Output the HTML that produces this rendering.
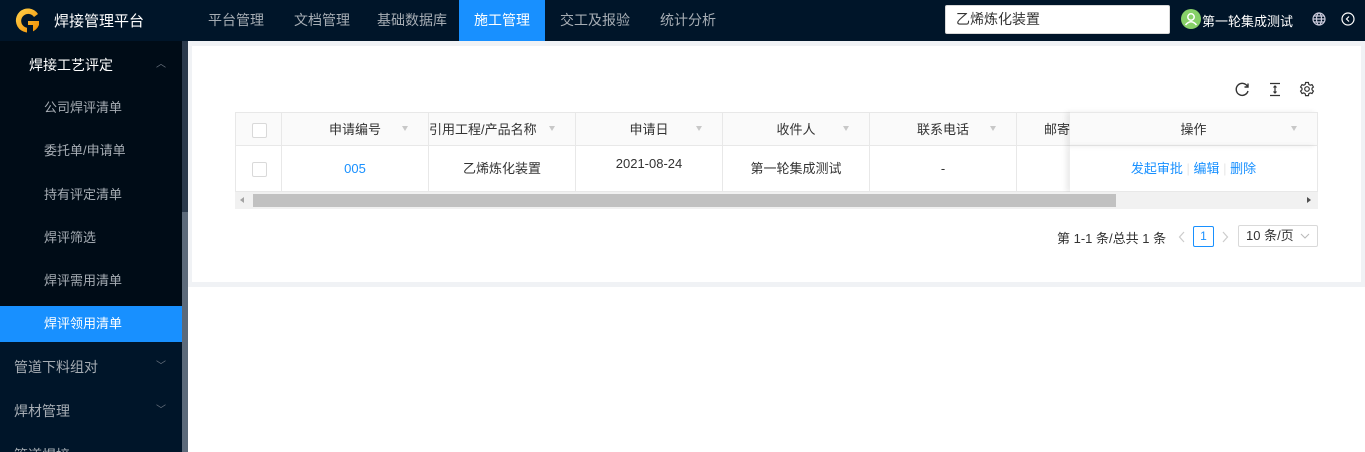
<!DOCTYPE html>
<html style="overflow:hidden;height:452px"><head><meta charset="utf-8"><style>
*{margin:0;padding:0;box-sizing:border-box}
body{width:1365px;height:452px;overflow:hidden;background:#fff;font-family:"Liberation Sans","Noto Sans CJK SC",sans-serif;font-size:13px;color:#333;position:relative}
.hdr{position:absolute;left:0;top:0;width:1365px;height:41px;background:#001529}
.logo{position:absolute;left:13px;top:8px;width:30px;height:26px}
.title{position:absolute;left:54px;top:10px;color:#fff;font-size:15px}
.nav{position:absolute;top:0;height:41px;line-height:41px;color:#a6adb4;font-size:14px;text-align:center}
.nav.act{background:#1890ff;color:#fff}
.search{position:absolute;left:945px;top:5px;width:225px;height:29px;background:#fff;border:1px solid #d9d9d9;border-radius:2px;padding-left:10px;line-height:27px;font-size:14px;color:#333}
.av{position:absolute;left:1181px;top:9px;width:20px;height:20px;border-radius:50%;background:#87d068}
.uname{position:absolute;left:1202px;top:11px;color:#fff;font-size:13px}
.side{position:absolute;left:0;top:41px;width:182px;height:411px;background:#001529;overflow:hidden}
.sub{position:absolute;left:0;top:0;width:182px;height:265px;background:#000c17}
.si{position:absolute;left:0;width:182px;height:36px;line-height:36px;font-size:13px;color:#a6adb4;padding-left:44px}
.ri{position:absolute;left:0;width:182px;height:40px;line-height:40px;font-size:14px;color:#a6adb4;padding-left:14px;overflow:hidden}
.car{position:absolute;right:16px;top:14px;line-height:12px;height:12px;color:#6a7480;font-size:10px}
.sb{position:absolute;left:182px;top:41px;width:6px;height:411px;background:#2b3a4c}
.sbt{position:absolute;left:182px;top:212px;width:6px;height:240px;background:#5c6a7a}
.bg{position:absolute;left:188px;top:41px;width:1177px;height:246px;background:#f0f2f5}
.card{position:absolute;left:192px;top:46px;width:1169px;height:236px;background:#fff}
.th{position:absolute;top:112px;height:34px;background:#fafafa;border-bottom:1px solid #e8e8e8;border-right:1px solid #e8e8e8;text-align:center;line-height:33px;color:#333}
.td{position:absolute;top:146px;height:46px;border-bottom:1px solid #e8e8e8;border-right:1px solid #e8e8e8;text-align:center;line-height:46px}
.fil{position:absolute;top:13px;width:0;height:0;border-left:3.5px solid transparent;border-right:3.5px solid transparent;border-top:5px solid #c8c8c8}
.cb{position:absolute;width:15px;height:15px;border:1px solid #d9d9d9;border-radius:2px;background:#fff}
.a{color:#1890ff}
</style></head><body>
<div class="hdr">
<svg class="logo" viewBox="0 0 30 26"><defs><linearGradient id="g" x1="0" y1="0" x2="1" y2="1"><stop offset="0" stop-color="#ffd24d"/><stop offset="1" stop-color="#f08c00"/></linearGradient></defs><path d="M25 6 A12 12 0 1 0 26 17 L26 13 L15 13 L15 18 L20 18 A7 7 0 1 1 21 9 Z" fill="url(#g)"/><rect x="14" y="17" width="6" height="8" fill="#001529"/></svg>
<div class="title">焊接管理平台</div>
<div class="nav" style="left:193px;width:86px">平台管理</div>
<div class="nav" style="left:279px;width:86px">文档管理</div>
<div class="nav" style="left:365px;width:94px">基础数据库</div>
<div class="nav act" style="left:459px;width:86px">施工管理</div>
<div class="nav" style="left:545px;width:100px">交工及报验</div>
<div class="nav" style="left:645px;width:86px">统计分析</div>
<div class="search">乙烯炼化装置</div>
<div class="av"><svg width="20" height="20" viewBox="0 0 20 20"><circle cx="10" cy="8" r="3.2" fill="none" stroke="#fff" stroke-width="1.5"/><path d="M4.5 16 Q10 9.5 15.5 16" fill="none" stroke="#fff" stroke-width="1.5"/></svg></div>
<div class="uname">第一轮集成测试</div>
<svg style="position:absolute;left:1312px;top:12px" width="14" height="14" viewBox="0 0 14 14" fill="none" stroke="#ccd" stroke-width="1.2"><circle cx="7" cy="7" r="6"/><ellipse cx="7" cy="7" rx="2.5" ry="6"/><path d="M1 7h12M2 4h10M2 10h10"/></svg>
<svg style="position:absolute;left:1341px;top:12px" width="14" height="14" viewBox="0 0 14 14" fill="none" stroke="#fff" stroke-width="1.2"><circle cx="7" cy="7" r="6"/><path d="M8 4.5 5.5 7 8 9.5"/></svg>
</div>
<div class="side">
<div class="sub">
<div class="ri" style="top:4px;color:#fff;padding-left:29px">焊接工艺评定<span class="car">︿</span></div>
<div class="si" style="top:49px">公司焊评清单</div>
<div class="si" style="top:92px">委托单/申请单</div>
<div class="si" style="top:136px">持有评定清单</div>
<div class="si" style="top:179px">焊评筛选</div>
<div class="si" style="top:222px">焊评需用清单</div>
</div>
<div class="si" style="top:265px;background:#1890ff;color:#fff">焊评领用清单</div>
<div class="ri" style="top:306px">管道下料组对<span class="car">﹀</span></div>
<div class="ri" style="top:350px">焊材管理<span class="car">﹀</span></div>
<div class="ri" style="top:394px;height:17px">管道焊接</div>
</div>
<div class="sb"></div><div class="sbt"></div>
<div class="bg"></div>
<div class="card"></div>
<svg style="position:absolute;left:1235px;top:82px" width="15" height="15" viewBox="0 0 15 15" fill="none" stroke="#333" stroke-width="1.4"><path d="M12.5 4.5A6 6 0 1 0 13 9"/><path d="M13 1.5v3.5h-3.5"/></svg>
<svg style="position:absolute;left:1268px;top:82px" width="14" height="15" viewBox="0 0 14 15" fill="none" stroke="#333" stroke-width="1.2"><path d="M2 1.5h10M2 13.5h10M7 4v7M5.5 5.5 7 4l1.5 1.5M5.5 9.5 7 11l1.5-1.5"/></svg>
<svg style="position:absolute;left:1299px;top:81px" width="16" height="16" viewBox="0 0 16 16" fill="none" stroke="#333" stroke-width="1.2"><path d="M6.6 1.5h2.8l.4 1.9 1.4.8 1.8-.6 1.4 2.4-1.4 1.3v1.5l1.4 1.3-1.4 2.4-1.8-.6-1.4.8-.4 1.9H6.6l-.4-1.9-1.4-.8-1.8.6-1.4-2.4 1.4-1.3V7.3L1.6 6l1.4-2.4 1.8.6 1.4-.8z"/><circle cx="8" cy="8" r="2.3"/></svg>

<div class="th" style="left:235px;width:47px;border-left:1px solid #e8e8e8;border-top:1px solid #e8e8e8"><div class="cb" style="left:16px;top:10px"></div></div>
<div class="th" style="left:282px;width:147px;border-top:1px solid #e8e8e8">申请编号<span class="fil" style="left:120px"></span></div>
<div class="th" style="left:429px;width:147px;border-top:1px solid #e8e8e8;text-align:left">引用工程/产品名称<span class="fil" style="left:120px"></span></div>
<div class="th" style="left:576px;width:147px;border-top:1px solid #e8e8e8">申请日<span class="fil" style="left:120px"></span></div>
<div class="th" style="left:723px;width:147px;border-top:1px solid #e8e8e8">收件人<span class="fil" style="left:120px"></span></div>
<div class="th" style="left:870px;width:147px;border-top:1px solid #e8e8e8">联系电话<span class="fil" style="left:120px"></span></div>
<div class="th" style="left:1017px;width:53px;border-top:1px solid #e8e8e8;text-align:right;border-right:none">邮寄</div>
<div class="th" style="left:1070px;width:248px;border-top:1px solid #e8e8e8;box-shadow:-4px 0 5px rgba(0,0,0,.08)">操作<span class="fil" style="left:221px"></span></div>

<div class="td" style="left:235px;width:47px;border-left:1px solid #e8e8e8"><div class="cb" style="left:16px;top:16px"></div></div>
<div class="td a" style="left:282px;width:147px">005</div>
<div class="td" style="left:429px;width:147px">乙烯炼化装置</div>
<div class="td" style="left:576px;width:147px;line-height:36px">2021-08-24</div>
<div class="td" style="left:723px;width:147px">第一轮集成测试</div>
<div class="td" style="left:870px;width:147px">-</div>
<div class="td" style="left:1017px;width:53px;border-right:none"></div>
<div class="td" style="left:1070px;width:248px;box-shadow:-4px 0 5px rgba(0,0,0,.08)"><span class="a">发起审批</span> <span style="color:#e8e8e8">|</span> <span class="a">编辑</span> <span style="color:#e8e8e8">|</span> <span class="a">删除</span></div>

<div style="position:absolute;left:235px;top:192px;width:1083px;height:17px;background:#f1f1f1"></div>
<div style="position:absolute;left:253px;top:194px;width:863px;height:13px;background:#c1c1c1"></div>
<div style="position:absolute;left:240px;top:197px;border-top:3.5px solid transparent;border-bottom:3.5px solid transparent;border-right:4px solid #a3a3a3"></div>
<div style="position:absolute;left:1307px;top:197px;border-top:3.5px solid transparent;border-bottom:3.5px solid transparent;border-left:4px solid #505050"></div>

<div style="position:absolute;left:1057px;top:228px;font-size:13px">第 1-1 条/总共 1 条</div>
<svg style="position:absolute;left:1178px;top:231px" width="8" height="12" viewBox="0 0 8 12" fill="none" stroke="#ccc" stroke-width="1.2"><path d="M6 1 1.5 6 6 11"/></svg>
<div style="position:absolute;left:1193px;top:226px;width:21px;height:21px;border:1px solid #1890ff;border-radius:2px;color:#1890ff;text-align:center;line-height:19px;font-size:12px">1</div>
<svg style="position:absolute;left:1221px;top:231px" width="8" height="12" viewBox="0 0 8 12" fill="none" stroke="#ccc" stroke-width="1.2"><path d="M2 1 6.5 6 2 11"/></svg>
<div style="position:absolute;left:1238px;top:225px;width:80px;height:22px;border:1px solid #d9d9d9;border-radius:2px;padding-left:7px;line-height:20px;font-size:13px">10 条/页<svg style="position:absolute;right:7px;top:7px" width="10" height="6" viewBox="0 0 10 6" fill="none" stroke="#bbb" stroke-width="1.1"><path d="M1 1 5 5 9 1"/></svg></div>
</body></html>
